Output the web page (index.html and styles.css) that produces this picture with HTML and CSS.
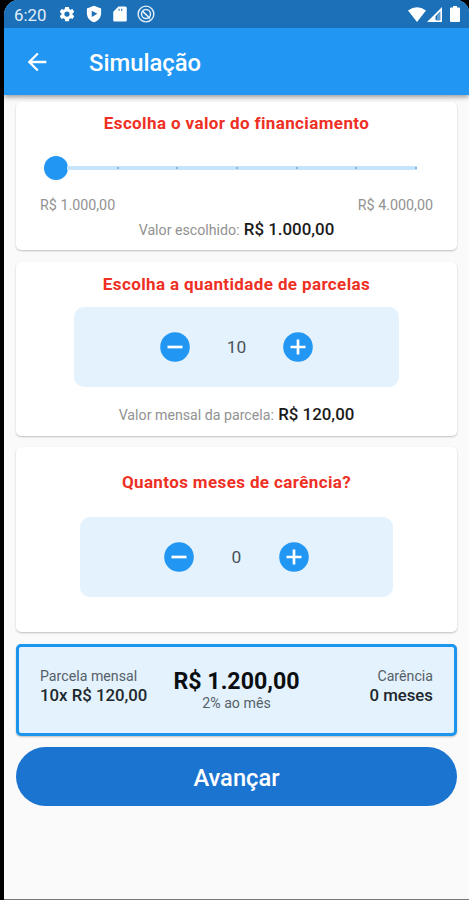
FILE: index.html
```html
<!DOCTYPE html>
<html lang="pt-BR">
<head>
<meta charset="utf-8">
<title>Simulação</title>
<link rel="stylesheet" href="styles.css">
</head>
<body>
<div class="screen">
  <header class="top">
    <div class="status">
      <span class="clock">6:20</span>
      <svg class="s-icon gear" viewBox="0 0 24 24"><path fill-rule="evenodd" d="M19.400 13a7.500 7.500 0 0 0 0-2l2.300-1.700-2.300-4-2.700 1.100-1.700-1L14.600 2.500h-5.200L9 5.400l-1.700 1-2.700-1.100-2.300 4L4.600 11a7.500 7.500 0 0 0 0 2l-2.300 1.700 2.300 4 2.700-1.100 1.700 1 .4 2.900h5.200l.4-2.900 1.700-1 2.700 1.100 2.300-4zM12 15.500a3.500 3.500 0 1 1 0-7 3.500 3.500 0 0 1 0 7z"/></svg>
      <svg class="s-icon shield" viewBox="0 0 24 24"><path fill-rule="evenodd" d="M12 1L2.500 4.500V11c0 5.700 4 10.700 9.500 12 5.500-1.300 9.500-6.300 9.500-12V4.500zM9 7.500l7.500 4.200L9 16z"/></svg>
      <svg class="s-icon sd" viewBox="0 0 24 24"><path fill-rule="evenodd" d="M19 2H10L3 9v11.500A1.500 1.500 0 0 0 4.500 22h15a1.500 1.500 0 0 0 1.500-1.500V4a2 2 0 0 0-2-2zM10 5h1.500v2.500H10zM13.500 5H15v2.500h-1.500z"/></svg>
      <svg class="s-icon sync" viewBox="0 0 24 24"><g fill="none" stroke="#e3effa"><circle cx="12" cy="12" r="10.500" stroke-width="1.900"/><circle cx="12" cy="12" r="6" stroke-width="2"/><path stroke-width="2.200" d="M7.500 8.500l10 9.500"/></g></svg>
      <span class="grow"></span>
      <svg class="wifi" viewBox="0 0 18 15"><path d="M0 3.500Q9-3 18 3.500L9 15z"/></svg>
      <svg class="signal" viewBox="0 0 15 15"><path fill-rule="evenodd" d="M15 0v15H0zM13.200 4.500L8.500 9.200v4.100h4.700z"/><path class="signal-dim" d="M10 7.700l3.200-3.200v8.800H10z"/></svg>
      <svg class="battery" viewBox="0 0 10 16"><path d="M3 0h4v1.500h2a1 1 0 0 1 1 1V15a1 1 0 0 1-1 1H1a1 1 0 0 1-1-1V2.500a1 1 0 0 1 1-1h2z"/></svg>
    </div>
    <div class="appbar">
      <svg class="back" viewBox="0 0 24 24"><path d="M20 11H7.830l5.590-5.590L12 4l-8 8 8 8 1.410-1.410L7.830 13H20z"/></svg>
      <h1>Simulação</h1>
    </div>
  </header>
  <main>
    <section class="card amount">
      <h2>Escolha o valor do financiamento</h2>
      <div class="slider"><span class="thumb"></span><div class="track"><i></i><i></i><i></i><i></i><i></i><i></i><i></i></div></div>
      <div class="range"><span>R$ 1.000,00</span><span>R$ 4.000,00</span></div>
      <p class="result"><span>Valor escolhido:</span> <b>R$ 1.000,00</b></p>
    </section>
    <section class="card parcels">
      <h2>Escolha a quantidade de parcelas</h2>
      <div class="stepper">
        <svg class="round" viewBox="0 0 30 30"><circle cx="15" cy="15" r="14.800"/><path d="M7.500 15h15"/></svg>
        <span>10</span>
        <svg class="round" viewBox="0 0 30 30"><circle cx="15" cy="15" r="14.800"/><path d="M7.500 15h15M15 7.500v15"/></svg>
      </div>
      <p class="result"><span>Valor mensal da parcela:</span> <b>R$ 120,00</b></p>
    </section>
    <section class="card grace">
      <h2>Quantos meses de carência?</h2>
      <div class="stepper">
        <svg class="round" viewBox="0 0 30 30"><circle cx="15" cy="15" r="14.800"/><path d="M7.500 15h15"/></svg>
        <span>0</span>
        <svg class="round" viewBox="0 0 30 30"><circle cx="15" cy="15" r="14.800"/><path d="M7.500 15h15M15 7.500v15"/></svg>
      </div>
    </section>
    <section class="summary">
      <div class="col"><small>Parcela mensal</small><strong>10x R$ 120,00</strong></div>
      <div class="col total"><strong>R$ 1.200,00</strong><small>2% ao mês</small></div>
      <div class="col end"><small>Carência</small><strong>0 meses</strong></div>
    </section>
    <button class="next" type="button">Avançar</button>
  </main>
</div>
</body>
</html>
```
FILE: styles.css
```css
* { box-sizing: border-box; }
body {
  margin: 0;
  height: 900px;
  padding-left: 4px;
  background: #000;
  font-family: Roboto, "Liberation Sans", sans-serif;
  overflow: hidden;
}
h1, h2, p { margin: 0; }
svg { display: block; flex: none; fill: #fff; }
.screen {
  height: 900px;
  background: #fafafa;
  border-bottom: 1px solid #777;
  border-radius: 15px 13px 0 0;
  overflow: hidden;
}
.top {
  height: 95px;
  background: #2196f3;
  box-shadow: 0 2px 5px rgba(0, 0, 0, .4);
}
.status {
  height: 28px;
  background: #1c70b7;
  display: flex;
  align-items: center;
  padding: 0 9px 0 10px;
}
.clock { width: 45px; color: #e3effa; font-size: 16.800px; line-height: 28px; padding-top: 2px; }
.s-icon { width: 18px; height: 18px; }
.gear { margin-right: 9px; margin-left: -1px; }
.shield { margin-right: 8px; }
.sd { margin-right: 8px; }
.grow { flex: 1; }
.wifi { width: 18px; height: 15px; margin-right: 1px; }
.signal { width: 15px; height: 15px; margin-right: 8px; }
.signal-dim { fill: #5f9ccf; }
.battery { width: 10px; height: 16px; }
.appbar { height: 67px; display: flex; align-items: center; padding-left: 19px; }
.back { width: 28px; height: 28px; }
h1 { margin-left: 38px; font-size: 23.800px; font-weight: 500; color: #fff; line-height: 30px; padding-top: 3px; }
main { padding: 7px 12px 0; }
.card {
  background: #fff;
  border-radius: 5px;
  box-shadow: 0 1px 2px rgba(0, 0, 0, .24);
  display: flex;
  flex-direction: column;
  align-items: center;
}
h2 { color: #ee3024; font-size: 17px; line-height: 20px; font-weight: 700; letter-spacing: .38px; }
.amount { height: 148px; padding: 11px 24px 0; }
.slider { display: flex; align-items: center; align-self: stretch; height: 24px; margin: 23px 16px 0 4px; }
.thumb { width: 24px; height: 24px; border-radius: 50%; background: #2196f3; flex: none; }
.track { height: 4px; margin-left: -1px; flex: 1; background: #c8e4fb; display: flex; align-items: center; justify-content: space-between; }
.track i { width: 2px; height: 2px; border-radius: 50%; background: #79a5cc; }
.track i:first-child { visibility: hidden; margin-left: -10px; }
.range { display: flex; justify-content: space-between; align-self: stretch; margin-top: 16px; font-size: 14.300px; line-height: 18px; color: #929292; }
.result { color: #1b1b1b; font-size: 16.900px; line-height: 22px; margin-top: 4px; white-space: nowrap; }
.result span { font-size: 14.200px; color: #929292; }
.result b { font-weight: 500; }
.parcels { height: 174px; margin-top: 12px; padding-top: 12px; }
.stepper {
  width: 325px;
  height: 80px;
  margin-top: 13px;
  background: #e3f2fd;
  border-radius: 10px;
  display: flex;
  align-items: center;
  justify-content: center;
  gap: 37px;
  font-size: 17.400px;
  color: #4a535a;
}
.round { width: 30px; height: 30px; fill: #2196f3; stroke: #fff; stroke-width: 2.700; }
.round circle { stroke: none; }
.parcels .result { margin-top: 16px; }
.grace { height: 185px; margin-top: 11px; padding-top: 25px; }
.grace .stepper { width: 313px; margin-top: 25px; gap: 38px; }
.summary {
  height: 92px;
  margin-top: 12px;
  border: 3px solid #1b95ee;
  border-radius: 5px;
  background: #e3f2fd;
  display: grid;
  grid-template-columns: 1fr auto 1fr;
  padding: 20px 21px 0;
  box-shadow: 0 1px 2px rgba(0, 0, 0, .25);
}
.col { display: flex; flex-direction: column; }
.col small { font-size: 14.200px; line-height: 18px; color: #566068; }
.col strong { font-size: 16.800px; line-height: 20px; font-weight: 500; color: #20272c; }
.total { align-items: center; }
.total strong { font-size: 23.200px; line-height: 28px; font-weight: 700; color: #0b0e10; }
.total small { line-height: 17px; }
.end { align-items: flex-end; }
.next {
  display: block;
  width: 100%;
  height: 59px;
  margin-top: 11px;
  border: 0;
  border-radius: 30px;
  background: #1c74d1;
  color: #fff;
  font: 500 23.700px Roboto, sans-serif;
  padding: 2px 0 0;
}
```
